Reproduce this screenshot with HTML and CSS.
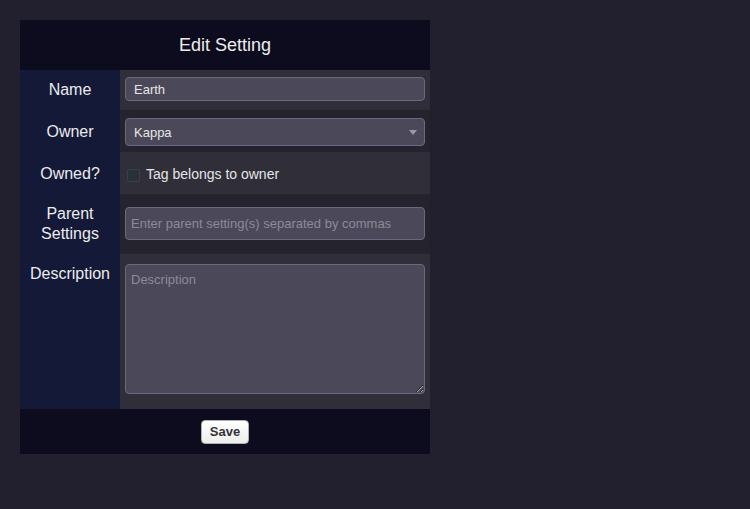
FILE: index.html
```html
<!DOCTYPE html>
<html>
<head>
<meta charset="utf-8">
<link rel="stylesheet" href="styles.css">
</head>
<body>
<div class="card">
  <div class="card-header">Edit Setting</div>
  <div class="row row-light row-name">
    <div class="label">Name</div>
    <div class="value"><input class="field field-name" type="text" value="Earth"></div>
  </div>
  <div class="row row-dark row-owner">
    <div class="label">Owner</div>
    <div class="value">
      <div class="select">
        <span>Kappa</span>
        <span class="caret"></span>
      </div>
    </div>
  </div>
  <div class="row row-light row-owned">
    <div class="label">Owned?</div>
    <div class="value check-value">
      <span class="checkbox"></span>
      <span class="check-text">Tag belongs to owner</span>
    </div>
  </div>
  <div class="row row-dark row-parent">
    <div class="label">Parent<br>Settings</div>
    <div class="value"><input class="field field-parent" type="text" placeholder="Enter parent setting(s) separated by commas"></div>
  </div>
  <div class="row row-light row-desc">
    <div class="label">Description</div>
    <div class="value"><textarea class="field field-desc" placeholder="Description"></textarea></div>
  </div>
  <div class="card-footer">
    <button class="save">Save</button>
  </div>
</div>
</body>
</html>
```
FILE: styles.css
```css
html, body {
  margin: 0;
  padding: 0;
  background: #221f2e;
  font-family: "Liberation Sans", Arial, sans-serif;
}
body {
  padding: 20px;
}
.card {
  width: 410px;
  display: flex;
  flex-direction: column;
}
.card-header {
  height: 50px;
  background: #0d0c1f;
  color: #ececec;
  font-size: 18px;
  display: flex;
  align-items: center;
  justify-content: center;
}
.row {
  display: grid;
  grid-template-columns: 100px 1fr;
}
.label {
  background: #141937;
  color: #ececec;
  font-size: 16px;
  line-height: 20px;
  text-align: center;
  padding: 10px 2px 0;
}
.row-owner .label,
.row-owned .label { padding-top: 12px; }
.row-light .value { background: #2f2e39; }
.row-dark .value { background: #25242e; }
.value {
  padding: 0 5px;
}
.row-name .value { padding-top: 7px; padding-bottom: 9px; }
.row-owner .value { padding-top: 8px; padding-bottom: 6px; }
.row-parent .value { padding-top: 13px; padding-bottom: 14px; }
.row-desc .value { padding-top: 10px; padding-bottom: 15px; }
.field {
  display: block;
  box-sizing: border-box;
  width: 100%;
  margin: 0;
  background: #4b4859;
  border: 1px solid #6a6780;
  border-radius: 4px;
  color: #e6e6e6;
  font-family: "Liberation Sans", Arial, sans-serif;
  font-size: 13px;
  outline: none;
}
.field::placeholder {
  color: #8d8a9c;
}
.field-name {
  height: 24px;
  padding: 0 8px;
}
.field-parent {
  height: 33px;
  padding: 0 5px;
}
.field-desc {
  height: 130px;
  padding: 7px 5px;
  resize: vertical;
}
.select {
  box-sizing: border-box;
  height: 28px;
  background: #4b4859;
  border: 1px solid #6a6780;
  border-radius: 4px;
  color: #e6e6e6;
  font-size: 13px;
  padding: 1px 7px 0 8px;
  display: flex;
  align-items: center;
  justify-content: space-between;
}
.caret {
  width: 0;
  height: 0;
  border-left: 4px solid transparent;
  border-right: 4px solid transparent;
  border-top: 5px solid #9c99ab;
}
.row-owned .value {
  height: 42px;
  box-sizing: border-box;
  padding-top: 2px;
}
.check-value {
  display: flex;
  align-items: center;
  padding-left: 7px;
}
.checkbox {
  box-sizing: border-box;
  width: 13px;
  height: 13px;
  background: #28303a;
  border: 1px solid #3a3f4c;
  border-radius: 2px;
  margin-top: 2px;
  margin-right: 6px;
}
.check-text {
  color: #e6e6e6;
  font-size: 14px;
}
.card-footer {
  height: 45px;
  background: #0d0c1f;
  display: flex;
  align-items: center;
  justify-content: center;
}
.save {
  box-sizing: border-box;
  width: 48px;
  height: 24px;
  background: linear-gradient(#ffffff, #ededed);
  border: 1px solid #b0b0b0;
  border-radius: 4px;
  color: #333;
  font-family: "Liberation Sans", Arial, sans-serif;
  font-weight: bold;
  font-size: 13px;
  padding: 0;
}
```
